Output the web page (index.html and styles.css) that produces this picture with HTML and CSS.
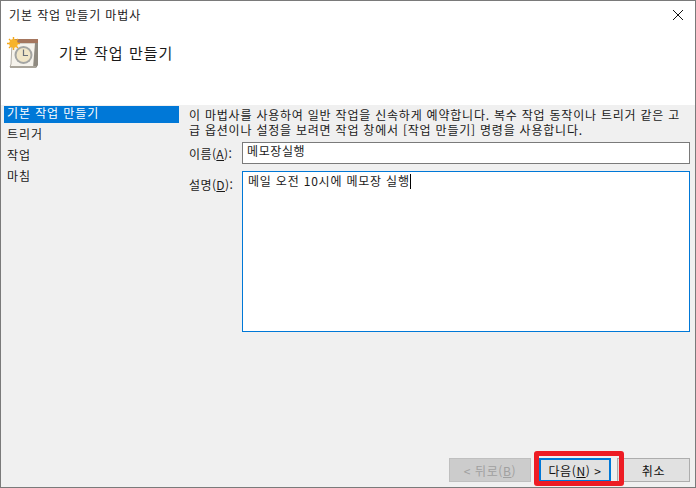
FILE: index.html
```html
<!DOCTYPE html>
<html lang="ko">
<head>
<meta charset="utf-8">
<title>기본 작업 만들기 마법사</title>
<link rel="stylesheet" href="styles.css">
</head>
<body>
<div class="window">
  <div class="titlebar">
    <span class="title">기본 작업 만들기 마법사</span>
    <svg class="close" width="12" height="12" viewBox="0 0 12 12"><path d="M1 1 11 11M11 1 1 11" stroke="#111" stroke-width="1" fill="none"/></svg>
  </div>
  <div class="header">
    <svg class="logo" width="32" height="32" viewBox="0 0 32 32">
      <path d="M5 6H30V28L29 30H3L4 27Z" fill="#f6f3ec" stroke="#b5b0a6" stroke-width="1"/>
      <rect x="6" y="2" width="25" height="4" fill="#a5765e"/>
      <path d="M28 6H31V28L29 31H26Z" fill="#8f8a80"/>
      <path d="M3 29H29V31H3Z" fill="#a9a49a"/>
      <circle cx="16.5" cy="18" r="9" fill="#a4a5a3"/>
      <circle cx="16.5" cy="18" r="7" fill="#f1e6c8"/>
      <path d="M16.5 12.5V18.5H21" stroke="#6a6f78" stroke-width="1.2" fill="none"/>
      <g stroke="#f5a81c" stroke-width="1.4"><path d="M6.500 0V13M0 6.500H13M2 2 11 11M11 2 2 11"/></g>
      <circle cx="6.500" cy="6.500" r="4.400" fill="#f7b32a"/>
    </svg>
    <h1 class="heading">기본 작업 만들기</h1>
  </div>
  <div class="body">
    <nav class="nav">
      <div class="nav-item selected">기본 작업 만들기</div>
      <div class="nav-item">트리거</div>
      <div class="nav-item">작업</div>
      <div class="nav-item">마침</div>
    </nav>
    <main class="content">
      <p class="intro">이 마법사를 사용하여 일반 작업을 신속하게 예약합니다. 복수 작업 동작이나 트리거 같은 고<br>급 옵션이나 설정을 보려면 작업 창에서 [작업 만들기] 명령을 사용합니다.</p>
      <div class="field">
        <label class="label">이름(<u>A</u>):</label>
        <div class="input">메모장실행</div>
      </div>
      <div class="field field-desc">
        <label class="label">설명(<u>D</u>):</label>
        <div class="textarea">메일 오전 10시에 메모장 실행<span class="caret"></span></div>
      </div>
    </main>
  </div>
  <div class="footer">
    <button class="btn btn-back" disabled>&lt; 뒤로(<u>B</u>)</button>
    <button class="btn btn-next">다음(<u>N</u>) &gt;</button>
    <button class="btn btn-cancel">취소</button>
    <div class="highlight"></div>
  </div>
</div>
</body>
</html>
```
FILE: styles.css
```css
* { box-sizing: border-box; }
html, body { margin: 0; padding: 0; }
body {
  width: 696px;
  height: 488px;
  overflow: hidden;
  font-family: "Noto Sans CJK KR", "Noto Sans", sans-serif;
  font-size: 12px;
  color: #1a1a1a;
}
.window {
  position: relative;
  width: 696px;
  height: 488px;
  display: flex;
  flex-direction: column;
  background: #f0f0f0;
  border: 1px solid #7a7a7a;
}
.titlebar {
  height: 29px;
  background: #fff;
  display: flex;
  align-items: center;
  justify-content: space-between;
  padding: 0 11px 2px 8px;
}
.title { font-size: 12px; letter-spacing: 0.9px; }
.header {
  height: 75px;
  background: #fff;
  display: flex;
  align-items: flex-start;
  padding: 7px 0 0 6px;
}
.logo { flex: none; }
.heading {
  margin: 5px 0 0 20px;
  font-size: 15px;
  font-weight: 400;
  letter-spacing: 1.05px;
  line-height: 22px;
}
.body {
  flex: 1;
  display: flex;
  min-height: 0;
}
.nav {
  width: 175px;
  flex: none;
  margin-left: 3px;
  padding-top: 1px;
}
.nav-item {
  height: 17px;
  line-height: 13px;
  padding-left: 3px;
  margin-bottom: 4px;
  letter-spacing: 0.9px;
}
.selected { background: #0078d7; color: #fff; }
.content {
  flex: 1;
  padding: 3px 5px 0 10px;
  min-width: 0;
}
.intro {
  margin: 0 0 5px;
  line-height: 14.500px;
  letter-spacing: 0.78px;
  white-space: nowrap;
}
.field { display: flex; align-items: center; }
.label { width: 53px; flex: none; letter-spacing: 0.4px; }
.input {
  flex: 1;
  height: 22px;
  line-height: 16px;
  background: #fff;
  border: 1px solid #7a7a7a;
  padding-left: 4px;
  letter-spacing: 0.6px;
}
.field-desc { align-items: flex-start; margin-top: 7px; }
.field-desc .label { padding-top: 5px; }
.textarea {
  flex: 1;
  height: 161px;
  background: #fff;
  border: 1px solid #0078d7;
  padding: 0 0 0 5px;
  line-height: 17px;
  letter-spacing: 0.8px;
}
.caret {
  display: inline-block;
  width: 1px;
  height: 15px;
  background: #000;
  vertical-align: -3px;
}
.footer {
  position: relative;
  height: 29px;
  flex: none;
  display: flex;
  padding-left: 448px;
}
.btn {
  height: 24px;
  padding: 0;
  font: inherit;
  letter-spacing: 0.6px;
  background: #e1e1e1;
  border: 1px solid #adadad;
  color: #111;
}
.btn-back { width: 82px; color: #a0a0a0; background: #cccccc; border-color: #bfbfbf; }
.btn-next { width: 72px; margin-left: 8px; border: 2px solid #0078d7; }
.btn-cancel { width: 73px; margin-left: 6px; }
.highlight {
  position: absolute;
  left: 533px;
  top: -7px;
  width: 90px;
  height: 35px;
  border: 5px solid #ed1c24;
  border-radius: 3px;
  pointer-events: none;
}
```
